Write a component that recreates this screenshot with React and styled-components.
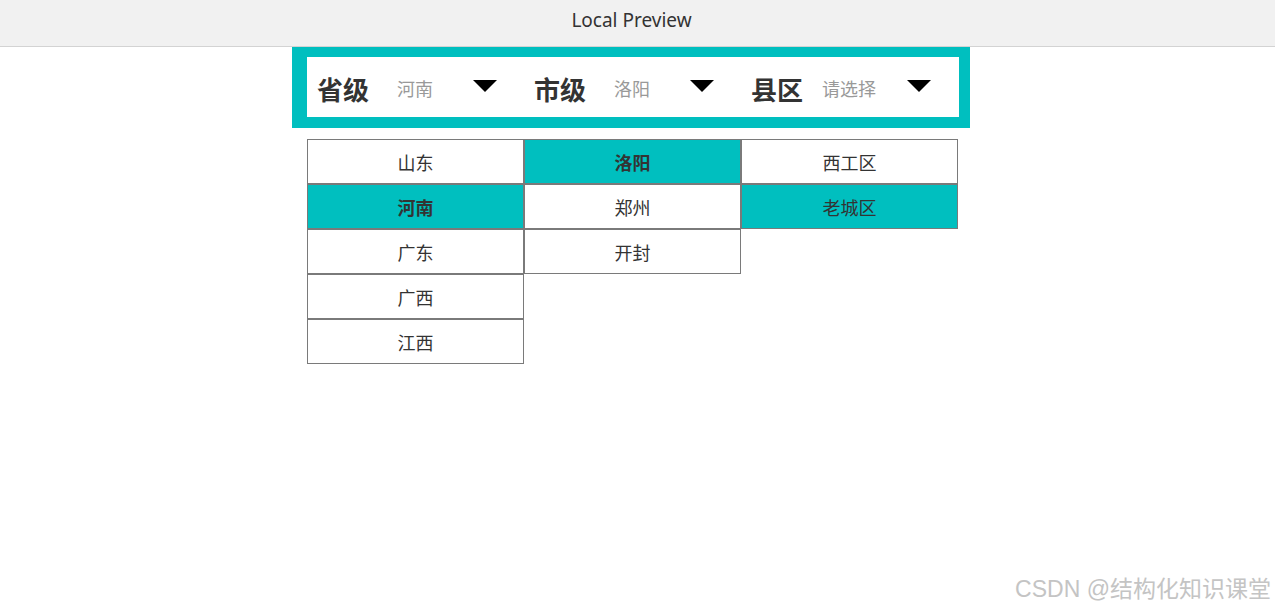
import React from "react";
import styled, { createGlobalStyle } from "styled-components";

const Global = createGlobalStyle`
  html, body { margin: 0; padding: 0; background: #fff; }
  body { font-family: "Noto Sans CJK SC", "Noto Sans", sans-serif; color: #333; }
`;

const TEAL = "#00bfbf";

const TopBar = styled.div`
  height: 47px;
  box-sizing: border-box;
  padding: 0 12px 7px 0;
  background: #f1f1f1;
  border-bottom: 1px solid #d3d3d3;
  display: flex;
  align-items: center;
  justify-content: center;
  font-family: "Noto Sans", "Open Sans", sans-serif;
  font-size: 19px;
  color: #333;
`;

const Main = styled.div`
  padding-left: 292px;
`;

const SelectorFrame = styled.div`
  width: 678px;
  box-sizing: border-box;
  background: ${TEAL};
  padding: 10px 11px 11px 15px;
`;

const SelectorBar = styled.div`
  height: 60px;
  background: #fff;
  display: grid;
  grid-template-columns: repeat(3, 217px);
`;

const Section = styled.div`
  display: flex;
  align-items: center;
  padding-left: 10px;
  padding-top: 2px;
`;

const Label = styled.span`
  width: 52px;
  font-size: 26px;
  font-weight: 700;
  color: #333;
  white-space: nowrap;
`;

const Value = styled.span`
  width: 92px;
  text-align: center;
  font-size: 18px;
  color: #999;
  white-space: nowrap;
`;

const Caret = styled.span`
  margin-left: 12px;
  width: 0;
  height: 0;
  border-left: 12px solid transparent;
  border-right: 12px solid transparent;
  border-top: 12px solid #000;
  margin-top: -4px;
`;

const Lists = styled.div`
  margin-top: 11px;
  margin-left: 15px;
  display: grid;
  grid-template-columns: repeat(3, 217px);
  align-items: start;
`;

const Column = styled.div`
  display: flex;
  flex-direction: column;
`;

const Cell = styled.div`
  height: 45px;
  box-sizing: border-box;
  border: 1px solid #7a7a7a;
  display: flex;
  align-items: center;
  justify-content: center;
  font-size: 18px;
  color: #333;
  background: ${(p) => (p.$active ? TEAL : "#fff")};
  font-weight: ${(p) => (p.$bold ? 700 : 400)};
`;

const Watermark = styled.div`
  position: absolute;
  right: 4px;
  bottom: 6px;
  font-family: "Liberation Sans", "Noto Sans CJK SC", sans-serif;
  font-size: 23px;
  color: #c4c4c4;
`;

const sections = [
  { label: "省级", value: "河南" },
  { label: "市级", value: "洛阳" },
  { label: "县区", value: "请选择" },
];

const columns = [
  [
    { t: "山东" },
    { t: "河南", a: true, b: true },
    { t: "广东" },
    { t: "广西" },
    { t: "江西" },
  ],
  [{ t: "洛阳", a: true, b: true }, { t: "郑州" }, { t: "开封" }],
  [{ t: "西工区" }, { t: "老城区", a: true }],
];

export default function App() {
  return (
    <>
      <Global />
      <TopBar>Local Preview</TopBar>
      <Main>
        <SelectorFrame>
          <SelectorBar>
            {sections.map((s) => (
              <Section key={s.label}>
                <Label>{s.label}</Label>
                <Value>{s.value}</Value>
                <Caret />
              </Section>
            ))}
          </SelectorBar>
        </SelectorFrame>
        <Lists>
          {columns.map((col, i) => (
            <Column key={i}>
              {col.map((c) => (
                <Cell key={c.t} $active={c.a} $bold={c.b}>
                  {c.t}
                </Cell>
              ))}
            </Column>
          ))}
        </Lists>
      </Main>
      <Watermark>CSDN @结构化知识课堂</Watermark>
    </>
  );
}
